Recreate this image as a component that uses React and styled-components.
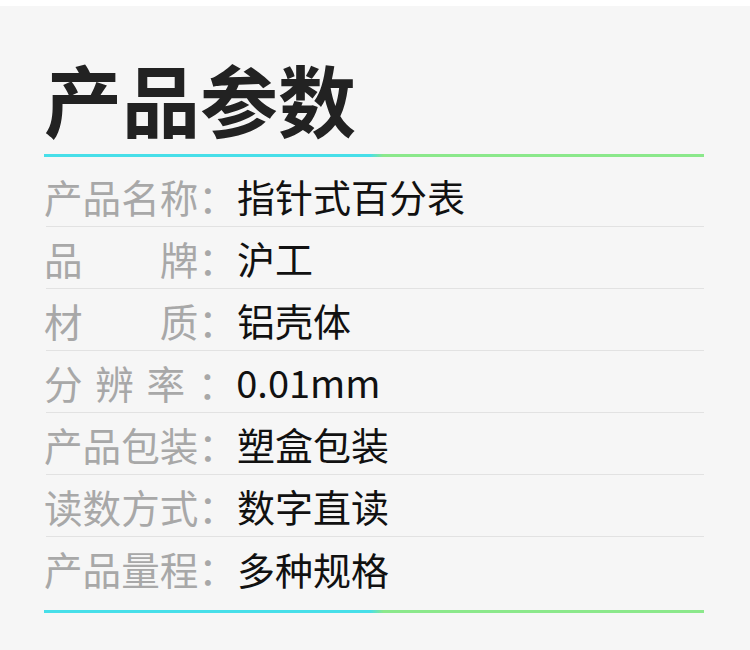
import React from "react";
import styled, { createGlobalStyle } from "styled-components";

const GlobalStyle = createGlobalStyle`
  html, body {
    margin: 0;
    padding: 0;
    background: #ffffff;
  }
  body {
    font-family: "Noto Sans CJK SC", "Noto Sans", sans-serif;
  }
`;

const Page = styled.div`
  margin-top: 6px;
  background: #f6f6f6;
  min-height: 644px;
  padding: 53px 46px 0 44px;
  box-sizing: border-box;
`;

const Title = styled.h1`
  margin: 0;
  font-size: 78px;
  line-height: 78px;
  font-weight: 700;
  color: #222222;
`;

const GradientLine = styled.div`
  height: 3px;
  margin-top: ${(p) => p.$top}px;
  background: linear-gradient(
    to right,
    #47dfe9 0%,
    #47dfe9 49.4%,
    #8be88b 51.4%,
    #8be88b 100%
  );
`;

const List = styled.div`
  display: flex;
  flex-direction: column;
  padding-top: 8px;
`;

const Row = styled.div`
  display: flex;
  align-items: center;
  height: 62px;
  margin-left: 2px;
  border-bottom: ${(p) => (p.$last ? "none" : "1px solid #e2e2e2")};
  box-sizing: border-box;
`;

const Label = styled.span`
  margin-left: -2px;
  font-size: 38.6px;
  color: #a8a8a8;
  white-space: pre;
  word-spacing: ${(p) => (p.$spaced ? "4px" : "0")};
`;

const Value = styled.span`
  font-size: 38px;
  color: #111111;
  white-space: pre;
`;

const params = [
  { label: "产品名称：", value: "指针式百分表" },
  { label: "品　　牌：", value: "沪工" },
  { label: "材　　质：", value: "铝壳体" },
  { label: "分 辨 率 ：", value: "0.01mm", spaced: true },
  { label: "产品包装：", value: "塑盒包装" },
  { label: "读数方式：", value: "数字直读" },
  { label: "产品量程：", value: "多种规格" },
];

export default function App() {
  return (
    <>
      <GlobalStyle />
      <Page>
        <Title>产品参数</Title>
        <GradientLine $top={17} />
        <List>
          {params.map((item, i) => (
            <Row key={item.label} $last={i === params.length - 1}>
              <Label $spaced={item.spaced}>{item.label}</Label>
              <Value>{item.value}</Value>
            </Row>
          ))}
        </List>
        <GradientLine $top={11} />
      </Page>
    </>
  );
}
